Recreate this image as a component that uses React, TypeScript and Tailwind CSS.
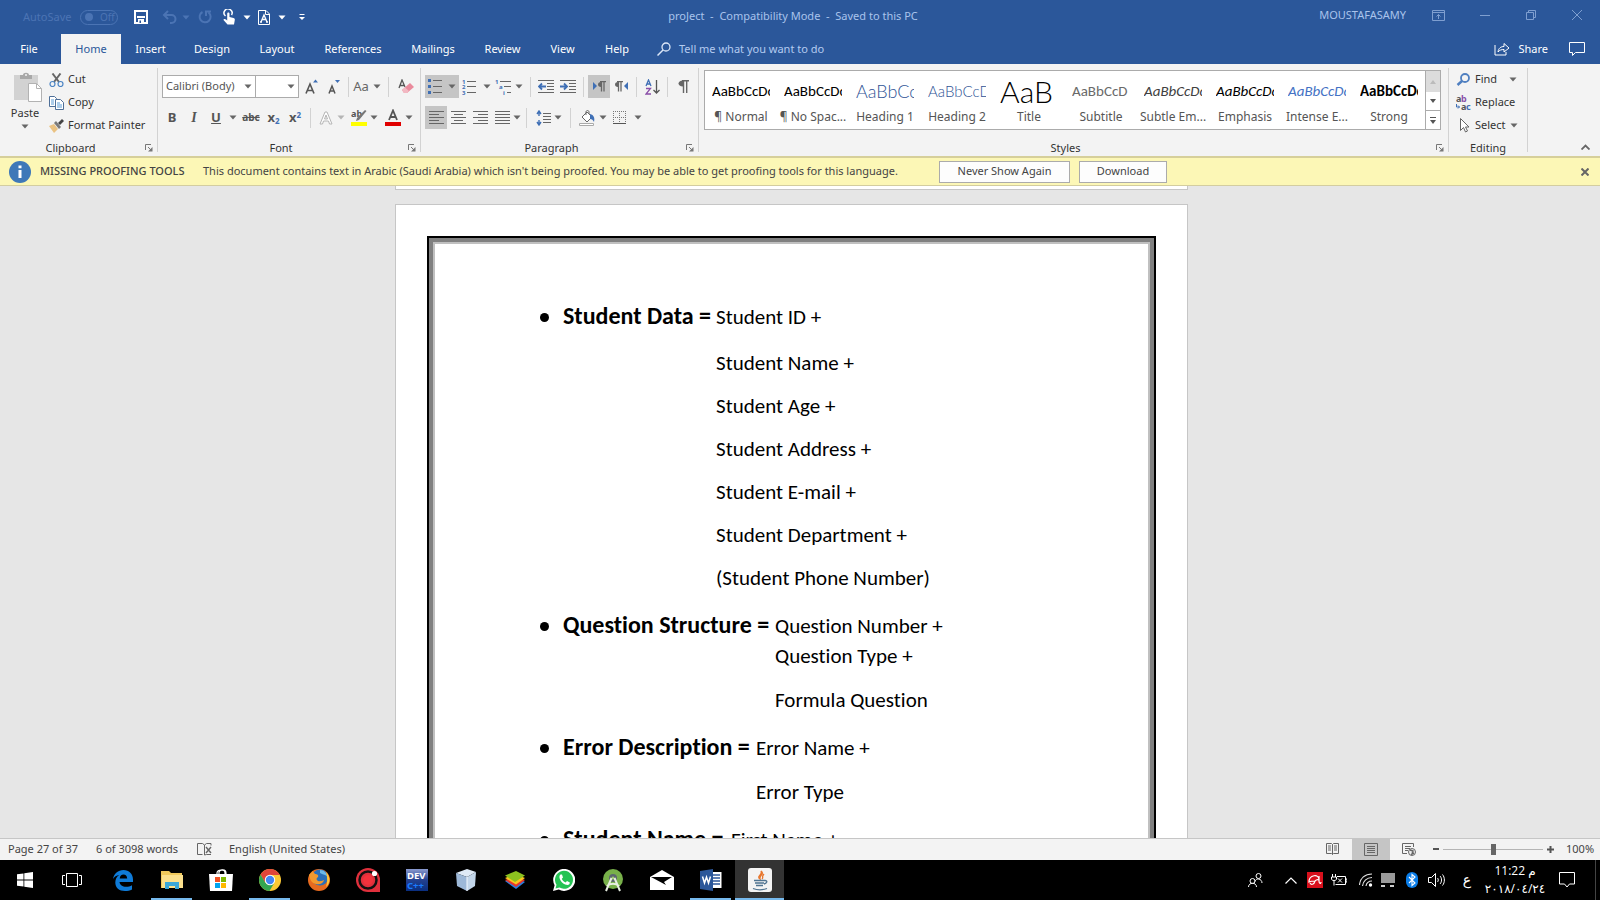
import React from "react";

type Kids = { children?: React.ReactNode };

const Caret = ({ color = "#666" }: { color?: string }) => (
  <svg width="8" height="5" viewBox="0 0 8 5" className="shrink-0" aria-hidden="true">
    <path d="M0.5 0.5h7L4 4.5z" fill={color} />
  </svg>
);

const Sep = ({ className = "" }: { className?: string }) => (
  <span className={`h-5 w-px shrink-0 bg-[#d2d2d2] ${className}`} />
);

const Tool = ({ label, className = "w-[22px]", children }: Kids & { label: string; className?: string }) => (
  <button aria-label={label} className={`flex h-[23px] shrink-0 items-center justify-center ${className}`}>
    {children}
  </button>
);

const Drop = ({ label, className = "w-3", color }: { label: string; className?: string; color?: string }) => (
  <Tool label={label} className={className}>
    <Caret color={color} />
  </Tool>
);

const Svg = ({ w, h, children }: Kids & { w: number; h: number }) => (
  <svg width={w} height={h} viewBox={`0 0 ${w} ${h}`} fill="none" className="shrink-0" aria-hidden="true">
    {children}
  </svg>
);

const Launcher = ({ label }: { label: string }) => (
  <button aria-label={label} className="absolute right-1 bottom-0">
    <Svg w={8} h={8}>
      <path d="M0.5 6V0.5H6M3 3l3 3" stroke="#777" />
      <path d="M7.500 3v4.500H3z" fill="#777" />
    </Svg>
  </button>
);

const Group = ({ name, className = "", launcher = true, children }: Kids & { name: string; className?: string; launcher?: boolean }) => (
  <section aria-label={name} className={`relative mt-1 mb-1 flex flex-col border-r border-[#d2d2d2] ${className}`}>
    <div className="flex-1">{children}</div>
    <div className={`h-3 text-center leading-4 text-[#333] ${launcher ? "pr-4" : ""}`}>{name}</div>
    {launcher && <Launcher label={`${name} settings`} />}
  </section>
);

const Lines = ({ rows }: { rows: [number, number][] }) => (
  <Svg w={15} h={13}>
    {rows.map(([a, b], i) => (
      <path key={i} d={`M${a} ${i * 3 + 0.5}H${b}`} stroke="#666" />
    ))}
  </Svg>
);

function TitleBar() {
  return (
    <header className="flex h-[34px] shrink-0 items-center pb-1 text-[#a9c3ec]">
      <div className="flex w-[440px] items-center pt-1">
        <span className="ml-[23px] w-[57px] text-[#4b74b4]">AutoSave</span>
        <button aria-label="AutoSave" className="flex h-[15px] w-[38px] items-center gap-[7px] rounded-full border border-[#4b74b4] pl-1 text-[10px] leading-3 text-[#4b74b4]">
          <i className="size-2 rounded-full bg-[#4b74b4]" />
          Off
        </button>
        <button aria-label="Save" className="ml-4">
          <Svg w={14} h={14}>
            <path d="M1 1h12v12H1z" stroke="#fff" strokeWidth="2" />
            <path d="M3 7h8" stroke="#fff" strokeWidth="2" />
            <path d="M4 9h6v4H4z" fill="#fff" />
            <path d="M5.500 10.500h1.500V13H5.500z" fill="#2b579a" />
          </Svg>
        </button>
        <button aria-label="Undo" className="ml-[14px] flex items-center gap-1">
          <Svg w={16} h={14}>
            <path d="M6 1L2 5l4 4M2 5h7.500a4 4 0 0 1 0 8H8" stroke="#4b74b4" strokeWidth="2" />
          </Svg>
          <Caret color="#4b74b4" />
        </button>
        <button aria-label="Redo" className="ml-2">
          <Svg w={14} h={14}>
            <path d="M4.500 2A5.500 5.500 0 1 0 10.500 2.500M8 6V1.500H13" stroke="#4b74b4" strokeWidth="2" />
          </Svg>
        </button>
        <button aria-label="Touch mode" className="ml-[11px] flex items-center gap-2">
          <Svg w={12} h={16}>
            <path d="M2.500 7A4 4 0 1 1 8.500 6" stroke="#fff" strokeWidth="1.500" />
            <path d="M4.200 4.500c0-1.500 2.300-1.500 2.300 0V8l4 1c1 .3 1.500 1 1.300 2l-.8 4.500H4.500L.5 11c0-1.200 1.500-1.300 2.500-.5l1.200 1z" fill="#fff" />
          </Svg>
          <Caret color="#fff" />
        </button>
        <button aria-label="Document view" className="ml-[7px] flex items-center gap-2">
          <Svg w={12} h={15}>
            <path d="M.500.500H8L11.500 4v10.500H.500zM7.500.500V4.500h4" stroke="#fff" />
            <path d="M3 12l3-7 3 7M4 9.500h4M2 12h2M8 12h2" stroke="#fff" strokeWidth="1.300" />
          </Svg>
          <Caret color="#fff" />
        </button>
        <button aria-label="Customize toolbar" className="ml-3">
          <Svg w={8} h={8}>
            <path d="M1.500 1.500h5" stroke="#fff" />
            <path d="M1 4h6L4 7z" fill="#fff" />
          </Svg>
        </button>
      </div>
      <h1 className="flex-1 pt-[2px] text-center whitespace-pre">proJect  -  Compatibility Mode  -  Saved to this PC</h1>
      <div className="flex w-[454px] items-center justify-end pr-[18px]">
        <span className="mr-[26px]">MOUSTAFASAMY</span>
        <button aria-label="Ribbon display options" className="mr-[35px]">
          <Svg w={13} h={11}>
            <path d="M.5.5h12v10H.5zM.5 2.500h12M6.500 9V4.500M4.500 6.500l2-2 2 2" stroke="#7f9fd0" />
          </Svg>
        </button>
        <button aria-label="Minimize" className="mr-9">
          <Svg w={10} h={10}>
            <path d="M0 5.500h10" stroke="#7f9fd0" />
          </Svg>
        </button>
        <button aria-label="Restore" className="mr-9">
          <Svg w={10} h={10}>
            <path d="M.5 2.500h7v7h-7zM2.500 2.500v-2h7v7h-2" stroke="#7f9fd0" />
          </Svg>
        </button>
        <button aria-label="Close">
          <Svg w={10} h={10}>
            <path d="M0 0l10 10M10 0L0 10" stroke="#7f9fd0" />
          </Svg>
        </button>
      </div>
    </header>
  );
}

const tabs: [string, string][] = [
  ["File", "mr-[3px] w-[58px]"],
  ["Home", "w-[60px] bg-[#f3f3f3] text-[#2b579a]"],
  ["Insert", "w-[59px]"],
  ["Design", "w-[64px]"],
  ["Layout", "w-[66px]"],
  ["References", "w-[86px]"],
  ["Mailings", "w-[74px]"],
  ["Review", "w-[65px]"],
  ["View", "w-[55px]"],
  ["Help", "w-[54px]"],
];

function TabRow() {
  return (
    <nav className="flex h-[30px] shrink-0 items-stretch text-white">
      {tabs.map(([t, c]) => (
        <button key={t} className={`shrink-0 ${c}`}>
          {t}
        </button>
      ))}
      <button className="ml-[13px] flex items-center gap-2 text-[#b4cbf0]">
        <Svg w={14} h={14}>
          <circle cx="9" cy="5" r="4" stroke="#dce7f8" strokeWidth="1.300" />
          <path d="M6 8l-5.500 5.500" stroke="#dce7f8" strokeWidth="1.500" />
        </Svg>
        Tell me what you want to do
      </button>
      <div className="flex-1" />
      <button className="flex items-center gap-2">
        <Svg w={16} h={14}>
          <path d="M1 3v10h11v-3" stroke="#fff" />
          <path d="M4 10c.5-4 3-5.500 6-5.500V1.500L15 6l-5 4V7.500C7.500 7.500 5.500 8 4 10z" stroke="#fff" />
        </Svg>
        Share
      </button>
      <button aria-label="Comments" className="mr-[15px] ml-[21px]">
        <Svg w={16} h={14}>
          <path d="M.5.5h15v10h-9l-3 3v-3h-3z" stroke="#fff" />
        </Svg>
      </button>
    </nav>
  );
}

function Clipboard() {
  return (
    <Group name="Clipboard" className="w-[158px] shrink-0">
      <div className="flex">
        <button className="ml-[7px] flex w-9 flex-col items-center">
          <div className="mt-1 ml-1 h-[31px]">
            <Svg w={29} h={30}>
              <path d="M1 3h24v25H1z" fill="#d2d2d2" />
              <path d="M7 7V3h3c0-3 6-3 6 0h3v4z" fill="#a8a8a8" />
              <circle cx="13" cy="3" r="1" fill="#f3f3f3" />
              <path d="M15.500 11.500h8l5 5v13h-13z" fill="#fff" stroke="#b2b2b2" />
              <path d="M23.500 11.500v5h5" stroke="#b2b2b2" />
            </Svg>
          </div>
          <span className="mt-[2px] leading-4 text-[#333]">Paste</span>
          <span className="mt-[3px]">
            <Caret />
          </span>
        </button>
        <div className="ml-[6px] flex flex-col text-[#333]">
          <button className="flex h-[23px] items-center gap-1">
            <Svg w={15} h={14}>
              <path d="M3.500.5L10 9M11.500.5L5 9" stroke="#666" strokeWidth="2" />
              <circle cx="3.500" cy="11" r="2.500" stroke="#4b84c4" strokeWidth="1.200" />
              <circle cx="11.500" cy="11" r="2.500" stroke="#4b84c4" strokeWidth="1.200" />
            </Svg>
            Cut
          </button>
          <button className="flex h-[23px] items-center gap-1">
            <Svg w={15} h={14}>
              <path d="M.5.5h5l2 2v8h-7z" fill="#fff" stroke="#4e6f98" />
              <path d="M2 4h3M2 6h3M2 8h3" stroke="#5b9bd5" />
              <path d="M6.500 3.500h5l3 3v7h-8z" fill="#fff" stroke="#4e6f98" />
              <path d="M8 7h3M8 9h5M8 11h5" stroke="#5b9bd5" />
            </Svg>
            Copy
          </button>
          <button className="flex h-[23px] items-center gap-1">
            <Svg w={15} h={14}>
              <path d="M0 7l5-2 4 5-4 4z" fill="#eac282" />
              <path d="M5 4l2-2 5 6-2 2z" fill="#7a7a7a" />
              <path d="M9 4l4-4 2 2-4 4z" fill="#444" />
            </Svg>
            Format Painter
          </button>
        </div>
      </div>
    </Group>
  );
}

function FontGroup() {
  return (
    <Group name="Font" className="w-[263px] shrink-0">
      <div className="flex items-center pt-[7px] pl-1">
        <label className="flex h-[23px] w-[94px] items-center border border-[#ababab] bg-white px-[3px] text-[#555]">
          <input aria-label="Font name" defaultValue="Calibri (Body)" className="min-w-0 flex-1 bg-transparent outline-none" />
          <Caret />
        </label>
        <label className="-ml-px flex h-[23px] w-[44px] items-center border border-[#ababab] bg-white px-[3px]">
          <input aria-label="Font size" className="min-w-0 flex-1 bg-transparent outline-none" />
          <Caret />
        </label>
        <Tool label="Increase font size" className="ml-[2px] w-[22px]">
          <Svg w={14} h={16}>
            <path d="M1 14.500L5 5l4 9.500M2.500 11.500h5" stroke="#555" strokeWidth="1.600" />
            <path d="M8 3.500h5l-2.500-3z" fill="#3f6fb5" />
          </Svg>
        </Tool>
        <Tool label="Decrease font size">
          <Svg w={14} h={16}>
            <path d="M2 14.500L5 7l3 7.500M3 12h4" stroke="#555" strokeWidth="1.500" />
            <path d="M8 1h5l-2.500 3z" fill="#3f6fb5" />
          </Svg>
        </Tool>
        <Sep className="mx-[3px]" />
        <Tool label="Change case" className="w-[30px] gap-1 text-[13px] text-[#666]">
          Aa <Caret />
        </Tool>
        <Sep className="mr-2 ml-[6px]" />
        <Tool label="Clear formatting" className="w-[17px]">
          <Svg w={16} h={16}>
            <path d="M1 9L4 1l3 7M2 6.500h4" stroke="#555" strokeWidth="1.300" />
            <path d="M4 11l8-7 4 4-7 6H6z" fill="#ea8a9c" />
            <path d="M4 11l3-2.500L11 12l-2 2H6z" fill="#f2b8c2" />
          </Svg>
        </Tool>
      </div>
      <div className="flex items-center pt-2 pl-[3px] text-[13px] text-[#555]">
        <Tool label="Bold"><b>B</b></Tool>
        <Tool label="Italic"><b className="font-['Liberation_Serif',serif] text-sm italic">I</b></Tool>
        <Tool label="Underline"><b className="underline">U</b></Tool>
        <Drop label="Underline style" />
        <Tool label="Strikethrough" className="w-6"><b className="text-[10px] line-through">abc</b></Tool>
        <Tool label="Subscript" className="w-[21px]"><b>x<sub className="text-[8px] text-[#3f6fb5]">2</sub></b></Tool>
        <Tool label="Superscript"><b>x<sup className="text-[8px] text-[#3f6fb5]">2</sup></b></Tool>
        <Sep className="mx-1" />
        <Tool label="Text effects">
          <Svg w={14} h={14}>
            <path d="M1 13L6 1h2l5 12h-2.500L9.500 10h-5L3.500 13zM5.500 8h3L7 4z" fill="#fff" stroke="#b5b5b5" />
          </Svg>
        </Tool>
        <Drop label="Text effects options" className="w-2" color="#b5b5b5" />
        <Tool label="Highlight" className="ml-1 w-5">
          <Svg w={16} h={17}>
            <text x="0" y="8" fontSize="9" fontWeight="bold" fill="#555">ab</text>
            <path d="M15.500 2L8 11l-3 1 1-3L14 1z" fill="#777" />
            <path d="M0 13h16v4H0z" fill="#ff0" />
          </Svg>
        </Tool>
        <Drop label="Highlight color" className="w-[10px]" />
        <Tool label="Font color" className="ml-[2px] w-6">
          <Svg w={16} h={17}>
            <path d="M4 11L8 1.500 12 11M5.500 8h5" stroke="#555" strokeWidth="1.800" />
            <path d="M0 13h16v4H0z" fill="#e00000" />
          </Svg>
        </Tool>
        <Drop label="Font color options" className="w-2" />
      </div>
    </Group>
  );
}

function Paragraph() {
  return (
    <Group name="Paragraph" className="w-[278px] shrink-0">
      <div className="flex items-center pt-[7px] pl-1">
        <Tool label="Bullets" className="w-[34px] gap-[6px] bg-[#c5c5c5]">
          <Svg w={14} h={15}>
            <path d="M0 0h3v3H0zM0 6h3v3H0zM0 12h3v3H0z" fill="#3f6fb5" />
            <path d="M5 1.500h9M5 7.500h9M5 13.500h9" stroke="#666" />
          </Svg>
          <Caret />
        </Tool>
        <Tool label="Numbering" className="ml-[2px] w-[30px] gap-[6px]">
          <Svg w={15} h={16}>
            <g fontSize="6" fontWeight="bold" fill="#3f6fb5">
              <text x="0" y="5">1</text>
              <text x="0" y="10">2</text>
              <text x="0" y="16">3</text>
            </g>
            <path d="M5 2.500h9M5 7.500h9M5 13.500h9" stroke="#666" />
          </Svg>
          <Caret />
        </Tool>
        <Tool label="Multilevel list" className="ml-[3px] w-[30px] gap-1">
          <Svg w={16} h={16}>
            <g fontSize="6" fontWeight="bold" fill="#3f6fb5">
              <text x="0" y="5">1</text>
              <text x="4" y="10">a</text>
              <text x="8" y="16">i</text>
            </g>
            <path d="M5 2.500h11M9 7.500h7M12 13.500h4" stroke="#666" />
          </Svg>
          <Caret />
        </Tool>
        <Sep className="mr-1 ml-[6px]" />
        <Tool label="Decrease indent">
          <Svg w={16} h={13}>
            <path d="M0 .5h16M9 3.500h7M9 6.500h7M9 9.500h7M0 12.500h16" stroke="#666" />
            <path d="M1 6.500h7M4 3.500l-3 3 3 3" stroke="#3f6fb5" strokeWidth="1.800" />
          </Svg>
        </Tool>
        <Tool label="Increase indent">
          <Svg w={16} h={13}>
            <path d="M0 .5h16M9 3.500h7M9 6.500h7M9 9.500h7M0 12.500h16" stroke="#666" />
            <path d="M0 6.500h7M4 3.500l3 3-3 3" stroke="#3f6fb5" strokeWidth="1.800" />
          </Svg>
        </Tool>
        <Sep className="mr-1 ml-1" />
        <Tool label="Left to right" className="w-[22px] bg-[#c5c5c5]">
          <Svg w={13} h={11}>
            <path d="M0 1v8l4-4z" fill="#3f6fb5" />
            <path d="M8 1v5c-4 0-4-5 0-5z" fill="#666" />
            <path d="M7 .5h6M8.500.5v10M11 .5v10" stroke="#666" strokeWidth="1.300" />
          </Svg>
        </Tool>
        <Tool label="Right to left">
          <Svg w={13} h={11}>
            <path d="M13 1v8L9 5z" fill="#3f6fb5" />
            <path d="M3 1v5c-4 0-4-5 0-5z" fill="#666" />
            <path d="M2 .5h6M3.500.5v10M6 .5v10" stroke="#666" strokeWidth="1.300" />
          </Svg>
        </Tool>
        <Sep className="mx-1" />
        <Tool label="Sort">
          <Svg w={15} h={16}>
            <path d="M1 7l2.500-6L6 7M2 5h3" stroke="#3f6fb5" strokeWidth="1.300" />
            <path d="M1 9.500h4.500L1 15h5" stroke="#8a4fa8" strokeWidth="1.300" />
            <path d="M11.500 1v13M8.500 11l3 3 3-3" stroke="#555" strokeWidth="1.300" />
          </Svg>
        </Tool>
        <Sep className="mx-1" />
        <Tool label="Show marks">
          <Svg w={11} h={13}>
            <path d="M5 .5v6c-6 0-6-6 0-6z" fill="#666" />
            <path d="M4 .7h7M5.500.5V13M8.700.5V13" stroke="#666" strokeWidth="1.400" />
          </Svg>
        </Tool>
      </div>
      <div className="flex items-center pt-2 pl-1">
        <Tool label="Align left" className="w-[22px] bg-[#c5c5c5]"><Lines rows={[[0, 15], [0, 10], [0, 15], [0, 10], [0, 15]]} /></Tool>
        <Tool label="Center"><Lines rows={[[0, 15], [3, 12], [0, 15], [3, 12], [0, 15]]} /></Tool>
        <Tool label="Align right"><Lines rows={[[0, 15], [5, 15], [0, 15], [5, 15], [0, 15]]} /></Tool>
        <Tool label="Justify"><Lines rows={[[0, 15], [0, 15], [0, 15], [0, 15], [0, 15]]} /></Tool>
        <Drop label="Justify options" className="w-2" />
        <Sep className="mx-[5px]" />
        <Tool label="Line spacing" className="w-[22px]">
          <Svg w={15} h={16}>
            <path d="M3 1v5M1 4l2-3 2 3M3 15v-5M1 12l2 3 2-3" stroke="#3f6fb5" strokeWidth="1.400" />
            <path d="M7 3.500h8M7 6.500h8M7 9.500h8M7 12.500h8" stroke="#666" />
          </Svg>
        </Tool>
        <Drop label="Line spacing options" className="w-2" />
        <Sep className="mr-[5px] ml-2" />
        <Tool label="Shading">
          <Svg w={16} h={16}>
            <path d="M3 7l5-5 5 5-5 5z" fill="#fff" stroke="#666" />
            <path d="M7 5V2c0-2 3-2 3 0v2" stroke="#666" />
            <path d="M11 4c4 1 5 4 4 8-1-2-2-3-4-3z" fill="#3f6fb5" />
            <path d="M.5 13.500h14v2H.5z" fill="#fff" stroke="#aaa" />
          </Svg>
        </Tool>
        <Drop label="Shading color" className="w-[10px]" />
        <Tool label="Borders" className="w-6">
          <Svg w={14} h={14}>
            <path d="M.5 0v13M6.500 0v13M12.500 0v13M0 .5h13M0 6.500h13" stroke="#777" strokeDasharray="1 1" />
            <path d="M0 12.500h13" stroke="#555" />
          </Svg>
        </Tool>
        <Drop label="Border options" className="w-3" />
      </div>
    </Group>
  );
}

const styles: [string, string, string][] = [
  ["¶ Normal", "AaBbCcDc", "font-['Carlito','Lato',sans-serif] text-[15px] text-black"],
  ["¶ No Spac...", "AaBbCcDc", "font-['Carlito','Lato',sans-serif] text-[15px] text-black"],
  ["Heading 1", "AaBbCc", "font-['Lato',sans-serif] text-[18px] font-light text-[#2f5496]"],
  ["Heading 2", "AaBbCcD", "font-['Lato',sans-serif] text-[15px] font-light text-[#2f5496]"],
  ["Title", "AaB", "font-['Lato',sans-serif] text-[30px] font-light text-black"],
  ["Subtitle", "AaBbCcD", "font-['Carlito','Lato',sans-serif] text-[15px] text-[#6a6a6a]"],
  ["Subtle Em...", "AaBbCcDc", "font-['Carlito','Lato',sans-serif] text-[15px] italic text-[#404040]"],
  ["Emphasis", "AaBbCcDc", "font-['Carlito','Lato',sans-serif] text-[15px] italic text-black"],
  ["Intense E...", "AaBbCcDc", "font-['Carlito','Lato',sans-serif] text-[15px] italic text-[#4472c4]"],
  ["Strong", "AaBbCcDc", "font-['Carlito','Lato',sans-serif] text-[15px] font-bold text-black"],
];

function Styles() {
  return (
    <Group name="Styles" className="min-w-0 flex-1">
      <div className="mt-[2px] mr-[7px] ml-[5px] flex h-[60px] border border-[#ababab] bg-white">
        <div className="flex min-w-0 flex-1 overflow-hidden">
          {styles.map(([name, sample, c]) => (
            <button key={name} className="flex w-[72px] shrink-0 flex-col items-center">
              <span className={`mt-[7px] flex h-[26px] w-[58px] items-end overflow-hidden leading-[26px] whitespace-nowrap ${c}`}>
                {sample}
              </span>
              <span className="mt-[5px] text-[12px] leading-4 whitespace-nowrap text-[#555]">{name}</span>
            </button>
          ))}
        </div>
        <div className="flex w-[15px] flex-col border-l border-[#ababab]">
          <button aria-label="Previous styles" className="flex h-[21px] items-center justify-center bg-[#dcdcdc]"><Svg w={6} h={4}><path d="M0 4h6L3 0z" fill="#bbb" /></Svg></button>
          <button aria-label="Next styles" className="flex flex-1 items-center justify-center border-b border-[#ababab]"><Svg w={6} h={4}><path d="M0 0h6L3 4z" fill="#555" /></Svg></button>
          <button aria-label="More styles" className="flex flex-1 items-center justify-center"><Svg w={8} h={7}><path d="M1 0h6v1H1zM1 3h6L4 7z" fill="#555" /></Svg></button>
        </div>
      </div>
    </Group>
  );
}

function Editing() {
  return (
    <Group name="Editing" launcher={false} className="w-[79px] shrink-0">
      <div className="flex flex-col pl-[7px] text-[#333]">
        <button className="flex h-[23px] items-center gap-1">
          <Svg w={15} h={13}>
            <circle cx="9" cy="5" r="4" stroke="#4f7fc0" strokeWidth="1.800" />
            <path d="M6 8l-4.500 4" stroke="#4f7fc0" strokeWidth="2.500" />
          </Svg>
          <span className="mr-1 w-[26px] text-left">Find</span>
          <Caret />
        </button>
        <button className="flex h-[23px] items-center gap-1">
          <Svg w={15} h={16}>
            <g fontSize="9" fontWeight="bold">
              <text x="0" y="7" fill="#555">a</text>
              <text x="5" y="7" fill="#8a4fa8">b</text>
              <text x="5" y="15" fill="#555">a</text>
              <text x="10" y="15" fill="#3f6fb5">c</text>
            </g>
            <path d="M.5 9v3h3M2 10.500L3.500 12 2 13.500" stroke="#3f6fb5" />
          </Svg>
          Replace
        </button>
        <button className="flex h-[23px] items-center gap-1">
          <Svg w={15} h={15}>
            <path d="M4.500.5v12l3-3 2 4.500 2-1-2-4h3.500z" fill="#fff" stroke="#666" />
          </Svg>
          Select
          <Caret />
        </button>
      </div>
    </Group>
  );
}

function MessageBar() {
  return (
    <div className="flex h-[30px] shrink-0 items-center border-t-2 border-b border-t-[#d6cf9a] border-b-[#d3cda0] bg-[#fcf7b6] text-[#444]">
      <span className="ml-[9px]">
        <Svg w={22} h={22}>
          <circle cx="11" cy="11" r="11" fill="#3e78b8" />
          <path d="M9.500 9h3v8h-3zM9.500 4.500h3v2.800h-3z" fill="#fff" />
        </Svg>
      </span>
      <span className="ml-[9px] w-[163px] font-medium whitespace-nowrap">MISSING PROOFING TOOLS</span>
      <span className="w-[736px] whitespace-nowrap">
        This document contains text in Arabic (Saudi Arabia) which isn't being proofed. You may be able to get proofing tools for this language.
      </span>
      <button className="h-[22px] w-[131px] border border-[#ababab] bg-[#fdfdfd]">Never Show Again</button>
      <button className="ml-[9px] h-[22px] w-[88px] border border-[#ababab] bg-[#fdfdfd]">Download</button>
      <button aria-label="Dismiss" className="mr-[11px] ml-auto">
        <Svg w={8} h={8}>
          <path d="M.5.5l7 7M7.500.5l-7 7" stroke="#666" strokeWidth="2" />
        </Svg>
      </button>
    </div>
  );
}

type Entry = { term: string; col: string; values: [string, string][] };

const entries: Entry[] = [
  {
    term: "Student Data =",
    col: "w-[153px]",
    values: [
      ["Student ID +", ""],
      ["Student Name +", "pt-4"],
      ["Student Age +", "pt-[13px]"],
      ["Student Address +", "pt-[13px]"],
      ["Student E-mail +", "pt-[13px]"],
      ["Student Department +", "pt-[13px]"],
      ["(Student Phone Number)", "pt-[13px]"],
    ],
  },
  {
    term: "Question Structure =",
    col: "w-[212px]",
    values: [
      ["Question Number +", ""],
      ["Question Type +", ""],
      ["Formula Question", "pt-[14px]"],
    ],
  },
  {
    term: "Error Description =",
    col: "w-[193px]",
    values: [
      ["Error Name +", ""],
      ["Error Type", "pt-[14px]"],
    ],
  },
  { term: "Student Name =", col: "w-[168px]", values: [["First Name +", ""]] },
];

function Document() {
  return (
    <main className="min-h-0 flex-1 overflow-hidden bg-[#e6e6e6] pr-[17px]">
      <div className="mx-auto h-1 w-[793px] border-x border-b border-[#c6c6c6] bg-white" />
      <article className="mx-auto mt-[14px] h-[1123px] w-[793px] border border-[#c6c6c6] bg-white p-[31px]">
        <div className="h-full border-2 border-black">
          <div className="h-full border-4 border-[#808080]">
            <div className="h-full border-2 border-[#c0c0c0] pt-[57px] pl-[105px] font-['Carlito','Lato',sans-serif] text-black [font-variant-ligatures:none]">
              <ul className="flex flex-col gap-[17px]">
                {entries.map((e) => (
                  <li key={e.term} className="flex items-baseline">
                    <span className="mt-[12px] mr-[14px] size-[9px] shrink-0 self-start rounded-full bg-black" />
                    <strong className={`shrink-0 text-[24px] leading-[30px] whitespace-nowrap ${e.col}`}>{e.term}</strong>
                    <div>
                      {e.values.map(([v, c]) => (
                        <p key={v} className={`text-[21px] leading-[30px] whitespace-nowrap ${c}`}>{v}</p>
                      ))}
                    </div>
                  </li>
                ))}
              </ul>
            </div>
          </div>
        </div>
      </article>
    </main>
  );
}

function StatusBar() {
  return (
    <footer className="flex h-[22px] shrink-0 items-center border-t border-[#c6c6c6] bg-[#f3f3f3] pb-px text-[#444]">
      <span className="ml-2 w-[88px]">Page 27 of 37</span>
      <span className="w-[101px]">6 of 3098 words</span>
      <button aria-label="Proofing" className="w-8">
        <Svg w={15} h={13}>
          <path d="M5.500 11.500h-5V.5h5l2 1.500v10M7.500 2l2-1.500h4.500v2M7.500 12l2-.5H14" stroke="#666" />
          <path d="M9 4l5 6M14 4L9 10" stroke="#666" strokeWidth="1.400" />
        </Svg>
      </button>
      <span>English (United States)</span>
      <div className="ml-auto flex items-center">
        <button aria-label="Read mode" className="mr-[13px]">
          <Svg w={13} h={12}>
            <path d="M.5.5h5l1 1 1-1h5v10h-5l-1 1-1-1h-5zM6.500 1.500v10M2 3h3M2 5h3M2 7h3M8 3h3M8 5h3M8 7h3" stroke="#666" />
          </Svg>
        </button>
        <button aria-label="Print layout" className="flex h-[22px] w-[38px] items-center justify-center bg-[#c5c5c5]">
          <Svg w={14} h={13}>
            <path d="M.5.5h13v12H.5zM3 3.500h8M3 5.500h8M3 7.500h8M3 9.500h8" stroke="#666" />
          </Svg>
        </button>
        <button aria-label="Web layout" className="mr-[17px] ml-3">
          <Svg w={14} h={13}>
            <path d="M5 10.500H.5V.5h11V4M3 3.500h6M3 5.500h5M3 7.500h3" stroke="#666" />
            <circle cx="10" cy="9" r="3.500" fill="#eee" stroke="#666" />
            <path d="M8 7l3 1-1 3 2-1" stroke="#666" strokeWidth="1.500" />
          </Svg>
        </button>
        <button aria-label="Zoom out"><Svg w={6} h={6}><path d="M0 3h6" stroke="#555" strokeWidth="2" /></Svg></button>
        <input
          type="range"
          aria-label="Zoom"
          defaultValue={50}
          className="mx-1 h-3 w-[100px] appearance-none bg-[linear-gradient(#b5b5b5,#b5b5b5)] bg-[length:100%_1px] bg-center bg-no-repeat [&::-webkit-slider-thumb]:h-[11px] [&::-webkit-slider-thumb]:w-[5px] [&::-webkit-slider-thumb]:appearance-none [&::-webkit-slider-thumb]:bg-[#666]"
        />
        <button aria-label="Zoom in"><Svg w={7} h={7}><path d="M0 3.500h7M3.500 0v7" stroke="#555" strokeWidth="2" /></Svg></button>
        <span className="mr-2 ml-3 w-[26px] whitespace-nowrap">100%</span>
      </div>
    </footer>
  );
}

const TaskButton = ({ label, active, open, children }: Kids & { label: string; active?: boolean; open?: boolean }) => (
  <button aria-label={label} className={`relative flex w-[49px] shrink-0 items-center justify-center ${active ? "bg-[#333]" : ""}`}>
    {children}
    {open && <span className={`absolute bottom-0 h-[2px] bg-[#76b9ed] ${active ? "inset-x-0" : "inset-x-1"}`} />}
  </button>
);

function Taskbar() {
  return (
    <nav className="flex h-10 shrink-0 bg-black text-white">
      <TaskButton label="Start">
        <Svg w={16} h={16}><path d="M0 2.300L6.500 1.400V7.600H0zM7.300 1.300L16 0v7.600H7.300zM0 8.400h6.500v6.200L0 13.700zM7.300 8.400H16V16l-8.700-1.300z" fill="#fff" /></Svg>
      </TaskButton>
      <TaskButton label="Task view">
        <Svg w={24} h={14}><path d="M4.500.5h11v13h-11zM3 2.500H.5v9H3M17 2.500h2.500v9H17" stroke="#fff" /></Svg>
      </TaskButton>
      <TaskButton label="Edge">
        <Svg w={20} h={21}>
          <path d="M0 9C1 3.500 5 0 10.500 0 16 0 20 4 20 9.500V12H6.500c.3 3 3 4.800 6.500 4.800 2.300 0 4.300-.6 6-1.600v4.300c-2 1-4.300 1.500-7 1.500C6 21 2.300 17.500 2.300 12.500c0-3.300 1.500-6 4-7.500C3.500 5.300 1.200 7 0 9zm6.700-.6h7.500C14 5.800 12.700 4.500 10.500 4.500S7 6 6.700 8.400z" fill="#0f7bd8" />
        </Svg>
      </TaskButton>
      <TaskButton label="File Explorer" open>
        <Svg w={22} h={18}>
          <path d="M0 0h8l2 2h11v15H0z" fill="#f0c95c" />
          <path d="M1 4h21v13H1z" fill="#fbe08d" />
          <path d="M4 18v-7h14v7h-4v-3H8v3z" fill="#3aa7d8" />
        </Svg>
      </TaskButton>
      <TaskButton label="Store">
        <Svg w={24} h={22}>
          <path d="M8 6V4c0-4 8-4 8 0v2M10 6V3c1-3 7-3 7 1v2" stroke="#fff" strokeWidth="1.200" />
          <path d="M0 5h24l-1 17H1z" fill="#fff" />
          <path d="M6 8h5v5H6z" fill="#f25022" /><path d="M12 8h5v5h-5z" fill="#7fba00" />
          <path d="M6 14h5v5H6z" fill="#00a4ef" /><path d="M12 14h5v5h-5z" fill="#ffb900" />
        </Svg>
      </TaskButton>
      <TaskButton label="Chrome" open>
        <Svg w={22} h={22}>
          <circle cx="11" cy="11" r="11" fill="#fcc934" />
          <path d="M1.500 5.500A11 11 0 0 1 20.500 5.500L21 6H11L6 13.500z" fill="#e0453a" />
          <path d="M1.500 5.500A11 11 0 0 0 10.500 22L15.500 13.500 11 16l-4.800-2.500z" fill="#33a552" />
          <circle cx="11" cy="11" r="5.200" fill="#fff" /><circle cx="11" cy="11" r="4.200" fill="#4285f4" />
        </Svg>
      </TaskButton>
      <TaskButton label="Firefox">
        <Svg w={22} h={22}>
          <circle cx="11" cy="11" r="11" fill="#e66a1f" />
          <circle cx="12" cy="8.500" r="8" fill="#2b6fb8" />
          <path d="M12 1c4 0 7 3 7 6-3-2-4-1-7-3z" fill="#6db9e8" />
          <path d="M1 6c2-3 3-2 3-4 2 1 3 3 3 3 2 0 4 1 3 3-2 1-2 3 0 4 3 1 5-1 6-1-1 4-5 5-8 4C3 14 2 10 1 6z" fill="#f3992e" />
          <path d="M18 3c5 5 4 12 0 15 1-3 2-8 0-15z" fill="#ffc83a" />
        </Svg>
      </TaskButton>
      <TaskButton label="Recorder">
        <Svg w={24} h={24}>
          <path d="M12 0a12 12 0 1 0 0 24h12V12A12 12 0 0 0 12 0z" fill="#e0303c" />
          <circle cx="12" cy="12" r="8.500" fill="#e0303c" stroke="#111" strokeWidth="2.500" />
          <circle cx="12" cy="12" r="5" fill="#f2323c" />
          <circle cx="18.500" cy="5.500" r="2.600" fill="#fff" />
        </Svg>
      </TaskButton>
      <TaskButton label="Dev-C++">
        <Svg w={22} h={22}>
          <defs>
            <linearGradient id="dev" x1="0" y1="0" x2="0" y2="1"><stop stopColor="#8b9bd0" /><stop offset=".5" stopColor="#23408f" /><stop offset="1" stopColor="#0a2f80" /></linearGradient>
          </defs>
          <path d="M0 0h22v22H0z" fill="url(#dev)" />
          <text x="1" y="10" fontSize="9.500" fontWeight="bold" fill="#fff">DEV</text>
          <text x="1" y="20" fontSize="9.500" fontWeight="bold" fill="#1b7cff">C++</text>
        </Svg>
      </TaskButton>
      <TaskButton label="VirtualBox">
        <Svg w={22} h={22}>
          <path d="M1 4L12 0l9 3-9 5z" fill="#dfeaf6" /><path d="M1 4l11 4v14L2 17z" fill="#9db8d8" /><path d="M21 3l-9 5v14l8-5z" fill="#c3d6ea" />
          <path d="M12 8v14" stroke="#f4f9ff" />
        </Svg>
      </TaskButton>
      <TaskButton label="BlueStacks">
        <Svg w={22} h={18}>
          <path d="M1 10l10-4 10 5-9 7z" fill="#2a7fe0" /><path d="M1 9l10-4 10 4-9 7z" fill="#e8372c" /><path d="M1 7l10-4 10 4-9 6.500z" fill="#fbc81e" /><path d="M1 4.500L12 0l9 4.500L11 11z" fill="#8cc21f" />
        </Svg>
      </TaskButton>
      <TaskButton label="WhatsApp">
        <Svg w={22} h={22}>
          <path d="M0 22l1.600-5.700A11 11 0 1 1 5.800 20.500z" fill="#fff" />
          <path d="M2.500 19.500l1-3.700a9 9 0 1 1 3 2.800z" fill="#25c354" />
          <path d="M7.500 5.500c-3 2 .5 10 7 10.500 1.500 0 2.500-1.500 2.300-2.500L14 12l-1.400 1.500c-2-.8-3-2-3.800-3.800L10 8.500 9 5.500z" fill="#fff" />
        </Svg>
      </TaskButton>
      <TaskButton label="Android Studio">
        <Svg w={22} h={23}>
          <circle cx="11" cy="10" r="10" fill="#78b04a" /><circle cx="11" cy="9" r="4" fill="#5c6670" /><circle cx="11" cy="9" r="1.500" fill="#9fd06a" />
          <path d="M9.500 9L4 22M12.500 9L18 22M5 17c3-3 9-3 12 0" stroke="#e8efe2" strokeWidth="2" />
        </Svg>
      </TaskButton>
      <TaskButton label="Mail">
        <Svg w={24} h={20}><path d="M0 7l12-7 12 7v13H0z" fill="#fff" /><path d="M1 7h21l-8 5 2 3z" fill="#000" /></Svg>
      </TaskButton>
      <TaskButton label="Word" open>
        <Svg w={22} h={22}>
          <path d="M12 3h9.500v16H12z" fill="#fff" /><path d="M13 6h7M13 9h7M13 12h7M13 15h7" stroke="#2b579a" strokeWidth="1.300" />
          <path d="M0 2l13-2v22L0 20z" fill="#2b579a" /><path d="M2.500 7.500L4.500 14 6.500 8l2 6 2-6.500" stroke="#fff" strokeWidth="1.500" />
        </Svg>
      </TaskButton>
      <TaskButton label="Java" active open>
        <Svg w={24} h={24}>
          <rect width="24" height="24" rx="3" fill="#f3f3f3" />
          <path d="M12 11c-4-3 3-4 1-8 4 3-2 4-1 8zM14 11c2-2-1-2 2-5" stroke="#e8762c" strokeWidth="1.300" />
          <path d="M6 12.500h11M7 15h9M8 17.500h7M5 20.500c4 1.500 10 1.500 14 0M17 12.500c3 0 2 3-1 3.500" stroke="#4f7390" strokeWidth="1.300" />
        </Svg>
      </TaskButton>
      <div className="ml-auto flex items-center">
        <button aria-label="People" className="mr-[22px]">
          <Svg w={15} h={15}><circle cx="10.500" cy="3" r="2.500" stroke="#fff" /><path d="M7 8.500c1-4 7-3 7 1.500" stroke="#fff" /><circle cx="4.500" cy="8" r="2.500" stroke="#fff" /><path d="M.5 14c0-5 8-5 8 0" stroke="#fff" /></Svg>
        </button>
        <button aria-label="Hidden icons" className="mr-[10px]"><Svg w={12} h={7}><path d="M.5 6.500L6 1l5.500 5.500" stroke="#fff" strokeWidth="1.200" /></Svg></button>
        <button aria-label="Avira" className="mr-2">
          <Svg w={16} h={16}><path d="M0 0h16v16H0z" fill="#d8101c" /><path d="M2 10c0-7 10-9 10-2-2-1-3 0-4 1-2 0-4 0-6 1zM12 4v5c0 3 2 3 2 1M8 9c-1 4-4 4-5 2" stroke="#fff" strokeWidth="1.200" /></Svg>
        </button>
        <button aria-label="Battery" className="mr-3">
          <Svg w={16} h={12}><path d="M1.500 0v3M4.500 0v3M.5 3h5v2c0 2-5 2-5 0zM3 6v5.500" stroke="#fff" /><path d="M6 2.500h8.500v8H4.500M14.500 5H16v3h-1.500M7 4.500l4 4M11 4.500l-4 4" stroke="#fff" /></Svg>
        </button>
        <button aria-label="Wireless" className="mr-2">
          <Svg w={14} h={14}><path d="M.5 12C1 5 6 1 13 1M3.500 13C4 8 8 4.500 13 4.500M7 13c.5-3 3-5 6-5" stroke="#ddd" strokeWidth="1.200" /><circle cx="11.500" cy="12" r="1.700" fill="#fff" /></Svg>
        </button>
        <button aria-label="Network" className="mr-[11px]">
          <Svg w={14} h={14}><path d="M0 0h14v10H0z" fill="#9a9a9a" /><path d="M0 12h4v2H0zM9 12h4v2H9z" fill="#ccc" /></Svg>
        </button>
        <button aria-label="Bluetooth" className="mr-[10px]">
          <Svg w={12} h={16}><rect width="12" height="16" rx="6" fill="#0a7de8" /><path d="M3 5l6 6-3 2.500v-11L9 5l-6 6" stroke="#fff" strokeWidth="1.100" /></Svg>
        </button>
        <button aria-label="Volume" className="mr-[14px]">
          <Svg w={17} h={14}><path d="M.5 4.500h3l4-4v13l-4-4h-3zM9.500 5c1 1 1 3 0 4M12 3c2 2 2 6 0 8M14.500 1.500c2.500 3 2.500 8 0 11" stroke="#fff" /></Svg>
        </button>
        <button lang="ar" className="w-4 font-['DejaVu_Sans',sans-serif] text-sm">ع</button>
        <button lang="ar" className="mr-[6px] ml-[2px] w-[76px] text-center font-['Open_Sans','DejaVu_Sans',sans-serif] text-[12px] leading-[18px]">
          <span className="block">11:22 م</span>
          <span className="block">٢٠١٨/٠٤/٢٤</span>
        </button>
        <button aria-label="Action center" className="mr-5"><Svg w={16} h={16}><path d="M.5.500h15v11.500H10.500L8 15l-2.500-3H.5z" stroke="#fff" /></Svg></button>
        <span className="mr-1 h-10 w-px bg-[#444]" />
      </div>
    </nav>
  );
}

export default function App() {
  return (
    <div className="flex h-screen flex-col overflow-hidden bg-[#2b579a] font-['Noto_Sans','Segoe_UI',sans-serif] text-[11px]">
      <TitleBar />
      <TabRow />
      <div className="flex h-[92px] shrink-0 bg-[#f3f3f3]">
        <Clipboard />
        <FontGroup />
        <Paragraph />
        <Styles />
        <Editing />
        <div className="flex w-[72px] shrink-0 items-end justify-end pr-[10px] pb-[6px]">
          <button aria-label="Collapse ribbon"><Svg w={9} h={6}><path d="M.5 5.500l4-4 4 4" stroke="#666" strokeWidth="1.800" /></Svg></button>
        </div>
      </div>
      <MessageBar />
      <Document />
      <StatusBar />
      <Taskbar />
    </div>
  );
}
